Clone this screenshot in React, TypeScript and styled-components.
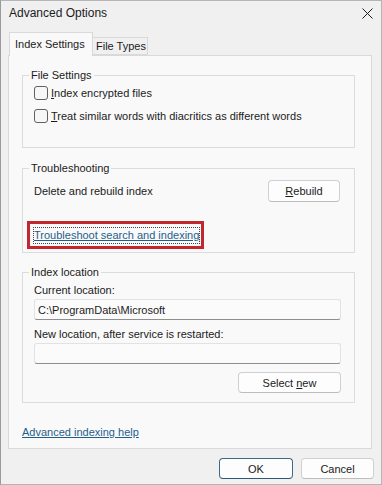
import React from "react";
import styled, { createGlobalStyle } from "styled-components";

// Global reset
const GlobalStyle = createGlobalStyle`
  html, body {
    margin: 0;
    padding: 0;
    background: #f0f0f0;
  }
  body {
    font-family: "Liberation Sans", Arial, sans-serif;
    font-size: 11px;
    color: #1b1b1b;
  }
  #root {
    width: 382px;
    height: 485px;
  }
`;

// Window chrome
const Window = styled.div`
  box-sizing: border-box;
  width: 382px;
  height: 485px;
  display: flex;
  flex-direction: column;
  background: #f0f0f0;
  border: 1px solid #b5b5b5;
  border-left-color: #9a9a9a;
`;

const TitleBar = styled.div`
  height: 32px;
  display: flex;
  align-items: flex-start;
  justify-content: space-between;
  padding: 4px 8px 0 8px;
  box-sizing: border-box;
`;

const Title = styled.span`
  font-size: 12px;
  line-height: 16px;
`;

const CloseIcon = styled.svg`
  margin-top: 3px;
`;

// Tabs
const TabStrip = styled.div`
  display: flex;
  align-items: flex-end;
  height: 22px;
  padding-left: 8px;
  position: relative;
  z-index: 1;
`;

const Tab = styled.div<{ $active?: boolean; $width: number }>`
  box-sizing: border-box;
  display: flex;
  align-items: center;
  height: ${(p) => (p.$active ? "24px" : "18px")};
  margin-bottom: ${(p) => (p.$active ? "-1px" : "0")};
  padding: ${(p) => (p.$active ? "0 0 2px 5px" : "0 0 0 3px")};
  width: ${(p) => p.$width}px;
  background: ${(p) => (p.$active ? "#f9f9f9" : "#f0f0f0")};
  border: 1px solid #d9d9d9;
  border-bottom: ${(p) => (p.$active ? "none" : "1px solid #d9d9d9")};
  border-left: ${(p) => (p.$active ? "1px solid #d9d9d9" : "none")};
  font-size: 11px;
`;

const Panel = styled.div`
  box-sizing: border-box;
  height: 394px;
  margin: 0 9px 0 7px;
  padding: 11px 0 0 13px;
  background: #f9f9f9;
  border: 1px solid #d9d9d9;
  display: flex;
  flex-direction: column;
  align-items: flex-start;
`;

// Group box
const Group = styled.fieldset<{ $height: number; $gap?: number }>`
  box-sizing: border-box;
  width: 333px;
  height: ${(p) => p.$height}px;
  margin: ${(p) => p.$gap ?? 0}px 0 0 0;
  padding: 0;
  border: 1px solid #dcdcdc;
  min-width: 0;
`;

const Legend = styled.legend`
  margin-left: 6px;
  padding: 0 2px;
  line-height: 16px;
  font-size: 11px;
`;

const GroupBody = styled.div<{ $pl?: number; $pr?: number }>`
  display: flex;
  flex-direction: column;
  padding: 0 ${(p) => p.$pr ?? 14}px 0 ${(p) => p.$pl ?? 11}px;
`;

// Checkbox rows
const CheckRow = styled.label<{ $mt?: number }>`
  display: flex;
  align-items: center;
  height: 20px;
  margin-top: ${(p) => p.$mt ?? 0}px;
  gap: 3px;
`;

const CheckBox = styled.span`
  box-sizing: border-box;
  width: 14px;
  height: 14px;
  border: 1px solid #616161;
  border-radius: 3px;
  background: #f7f7f7;
`;

// Buttons
const Button = styled.button<{ $width: number; $height?: number; $default?: boolean }>`
  box-sizing: border-box;
  width: ${(p) => p.$width}px;
  height: ${(p) => p.$height ?? 21}px;
  padding: 0;
  font-family: inherit;
  font-size: 11px;
  color: #1b1b1b;
  background: #fdfdfd;
  border: 1px solid ${(p) => (p.$default ? "#3f6886" : "#d0d0d0")};
  border-bottom-color: ${(p) => (p.$default ? "#2f5878" : "#bdbdbd")};
  border-radius: 4px;
`;

const ActionRow = styled.div<{ $mt?: number; $end?: boolean }>`
  display: flex;
  align-items: center;
  justify-content: ${(p) => (p.$end ? "flex-end" : "space-between")};
  margin-top: ${(p) => p.$mt ?? 4}px;
`;

const Highlight = styled.div`
  box-sizing: border-box;
  display: flex;
  align-items: center;
  width: 177px;
  height: 28px;
  margin: 19px 0 0 -7px;
  padding-left: 4px;
  border: 3px solid #c1272d;
`;

const Link = styled.a<{ $focused?: boolean }>`
  color: #1f5f8c;
  text-decoration: underline;
  line-height: 15px;
  font-size: 11px;
  outline: ${(p) => (p.$focused ? "1px dotted #444" : "none")};
  cursor: pointer;
`;

const FieldLabel = styled.div<{ $mt: number }>`
  line-height: 16px;
  margin-top: ${(p) => p.$mt}px;
`;

const TextBox = styled.div`
  box-sizing: border-box;
  height: 21px;
  margin-top: 1px;
  padding-left: 3px;
  display: flex;
  align-items: center;
  background: #fbfbfb;
  border: 1px solid #e2e2e2;
  border-bottom-color: #8e8e8e;
  border-radius: 3px;
`;

const HelpLink = styled.div`
  margin-top: 21px;
  line-height: 16px;
`;

const Footer = styled.div`
  display: flex;
  justify-content: flex-end;
  gap: 8px;
  padding: 9px 7px 0 0;
`;

const App: React.FC = () => {
  return (
    <>
      <GlobalStyle />
      <Window>
        <TitleBar>
          <Title>Advanced Options</Title>
          <CloseIcon width="11" height="11" viewBox="0 0 11 11">
            <path d="M0.5 0.5 L10.5 10.5 M10.5 0.5 L0.5 10.5" stroke="#1b1b1b" strokeWidth="1" fill="none" />
          </CloseIcon>
        </TitleBar>

        <TabStrip>
          <Tab $active $width={84}>Index Settings</Tab>
          <Tab $width={55}>File Types</Tab>
        </TabStrip>

        <Panel>
          <Group $height={81}>
            <Legend>File Settings</Legend>
            <GroupBody $pl={11}>
              <CheckRow>
                <CheckBox />
                <span>
                  <u>I</u>ndex encrypted files
                </span>
              </CheckRow>
              <CheckRow $mt={3}>
                <CheckBox />
                <span>
                  <u>T</u>reat similar words with diacritics as different words
                </span>
              </CheckRow>
            </GroupBody>
          </Group>

          <Group $height={93} $gap={12}>
            <Legend>Troubleshooting</Legend>
            <GroupBody $pl={11} $pr={14}>
              <ActionRow>
                <span>Delete and rebuild index</span>
                <Button $width={72} $height={22}>
                  <u>R</u>ebuild
                </Button>
              </ActionRow>
              <Highlight>
                <Link $focused>Troubleshoot search and indexing</Link>
              </Highlight>
            </GroupBody>
          </Group>

          <Group $height={139} $gap={11}>
            <Legend>Index location</Legend>
            <GroupBody $pl={11} $pr={13}>
              <FieldLabel $mt={2}>Current location:</FieldLabel>
              <TextBox>C:\ProgramData\Microsoft</TextBox>
              <FieldLabel $mt={6}>New location, after service is restarted:</FieldLabel>
              <TextBox />
              <ActionRow $mt={8} $end>
                <Button $width={103}>
                  Select <u>n</u>ew
                </Button>
              </ActionRow>
            </GroupBody>
          </Group>

          <HelpLink>
            <Link>Advanced indexing help</Link>
          </HelpLink>
        </Panel>

        <Footer>
          <Button $width={74} $default>
            OK
          </Button>
          <Button $width={73}>Cancel</Button>
        </Footer>
      </Window>
    </>
  );
};

export default App;
